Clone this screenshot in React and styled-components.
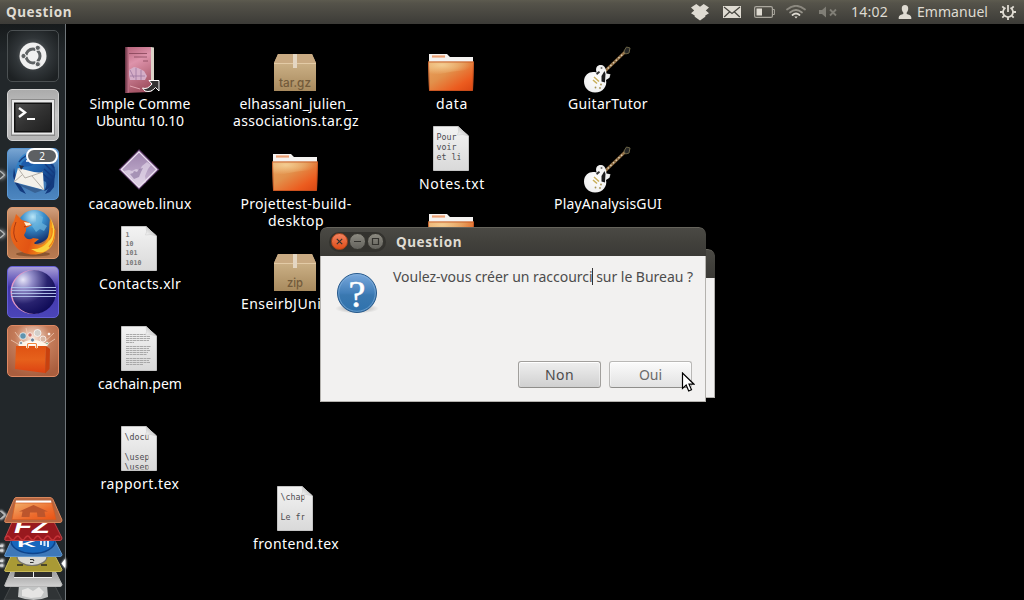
import React from "react";
import styled, { createGlobalStyle, css } from "styled-components";

const FONT = '"Noto Sans", "Open Sans", sans-serif';

const Global = createGlobalStyle`
  * { box-sizing: border-box; }
  html, body { margin: 0; padding: 0; background: #000; overflow: hidden; }
  svg { display: block; }
`;

const Screen = styled.div`
  display: flex;
  flex-direction: column;
  width: 1024px;
  height: 600px;
  overflow: hidden;
  background: #000;
  font-family: ${FONT};
  font-size: 14px;
  color: #fff;
`;

/* ---------- text whose tracking is computed to fill a given width ---------- */

const Line = styled.span`
  display: block;
  flex: none;
  white-space: pre;
  font-size: ${(p) => p.$size}px;
  font-weight: ${(p) => (p.$bold ? 700 : 400)};
`;

let ctx;
function tracking(text, width, size, bold) {
  ctx = ctx || document.createElement("canvas").getContext("2d");
  ctx.font = `${bold ? 700 : 400} ${size}px ${FONT}`;
  return (width - ctx.measureText(text).width) / text.length;
}

function Fit({ children, width, size = 14, bold }) {
  const style = { letterSpacing: `${tracking(children, width, size, bold)}px` };
  return (
    <Line $size={size} $bold={bold} style={style}>
      {children}
    </Line>
  );
}

/* ---------- top panel ---------- */

const Panel = styled.header`
  display: flex;
  align-items: center;
  justify-content: space-between;
  height: 24px;
  flex: none;
  padding: 0 8px 0 6px;
  color: #dfdbd2;
  line-height: 24px;
  background: linear-gradient(#5d5b4f 0, #55534a 3px, #3c3b37 100%);
`;

const Indicators = styled.div`
  display: flex;
  align-items: center;
  height: 24px;
`;

const Slot = styled.div`
  margin-left: ${(p) => p.$gap}px;
`;

const DropboxIcon = () => (
  <svg width="18" height="18" viewBox="0 0 18 18">
    <path
      fill="#dfdbd2"
      d="M5.3 1 9 3.700 12.700 1 18 4.600 14.800 7.400 18 10.300 14.300 12.600v1.200L9 17.400l-5.300-3.600V12.600L0 10.300 3.200 7.400 0 4.600z"
    />
  </svg>
);

const MailIcon = () => (
  <svg width="18" height="12" viewBox="0 0 18 12">
    <rect width="18" height="12" fill="#dfdbd2" />
    <path d="M1 1l8 6.500L17 1M1.200 11l5.300-5M16.800 11l-5.300-5" fill="none" stroke="#45443e" strokeWidth="1.200" />
  </svg>
);

const BatteryIcon = () => (
  <svg width="21" height="12" viewBox="0 0 21 12">
    <rect x="0.6" y="0.6" width="17.800" height="10.800" rx="1.500" fill="none" stroke="#aaa79e" strokeWidth="1.200" />
    <path d="M19 3.500h1.400v5H19" fill="none" stroke="#aaa79e" />
    <rect x="2.500" y="2.500" width="5.500" height="7" fill="#dfdbd2" />
  </svg>
);

const WifiIcon = () => (
  <svg width="20" height="14" viewBox="0 0 20 14" fill="none" strokeLinecap="round">
    <path d="M1 4.500Q10-3 19 4.500" stroke="#8b887f" strokeWidth="1.700" />
    <path d="M4 7.500Q10 2.500 16 7.500" stroke="#97948b" strokeWidth="1.700" />
    <path d="M6.500 10Q10 7 13.500 10" stroke="#dfdbd2" strokeWidth="1.800" />
    <path d="M8.300 11.500h3.400L10 13.500z" fill="#dfdbd2" />
  </svg>
);

const MuteIcon = () => (
  <svg width="18" height="12" viewBox="0 0 18 12">
    <path d="M0 4h3l4-3.500v11L3 8H0z" fill="#807e76" />
    <path d="M11 3.500l6 6m0-6l-6 6" stroke="#807e76" strokeWidth="1.800" />
  </svg>
);

const UserIcon = () => (
  <svg width="14" height="14" viewBox="0 0 14 14">
    <path
      fill="#dfdbd2"
      d="M7 0c2.300 0 3.200 1.500 3.200 3.500 0 1.700-.6 3-1.500 3.900v1.700c2 .8 4.300 1 4.600 3.200V14H.7v-1.700c.3-2.200 2.600-2.400 4.600-3.200V7.400C4.400 6.500 3.800 5.200 3.800 3.500 3.800 1.500 4.700 0 7 0z"
    />
  </svg>
);

const PowerIcon = () => (
  <svg width="16" height="16" viewBox="0 0 16 16" fill="none" stroke="#dfdbd2">
    <path d="M5.500 3.700a5 5 0 1 0 5 0" strokeWidth="1.800" />
    <path d="M8 1v7" strokeWidth="1.800" />
    <path
      d="M0 8h3M13 8h3M8 13v3M2.300 13.700l2-2M13.700 13.700l-2-2M2.300 2.300l2 2M13.700 2.300l-2 2"
      strokeWidth="1.800"
    />
  </svg>
);

function TopPanel() {
  return (
    <Panel>
      <Fit width={66} bold size={13.5}>Question</Fit>
      <Indicators>
        <Slot $gap={0}><DropboxIcon /></Slot>
        <Slot $gap={14}><MailIcon /></Slot>
        <Slot $gap={13}><BatteryIcon /></Slot>
        <Slot $gap={11}><WifiIcon /></Slot>
        <Slot $gap={13}><MuteIcon /></Slot>
        <Slot $gap={14}><Fit width={37}>14:02</Fit></Slot>
        <Slot $gap={10}><UserIcon /></Slot>
        <Slot $gap={5}><Fit width={71}>Emmanuel</Fit></Slot>
        <Slot $gap={12}><PowerIcon /></Slot>
      </Indicators>
    </Panel>
  );
}

/* ---------- launcher ---------- */

const Workspace = styled.div`
  display: flex;
  flex: 1;
  min-height: 0;
`;

const Launcher = styled.nav`
  display: flex;
  flex-direction: column;
  justify-content: space-between;
  width: 66px;
  flex: none;
  padding-top: 6px;
  border-right: 1px solid #70767a;
  background: linear-gradient(#161a1b, #22272a 30px);
`;

const Tiles = styled.div`
  display: flex;
  flex-direction: column;
  gap: 7px;
  padding-left: 7px;
`;

const tones = {
  dash: css`background: radial-gradient(circle at 50% 48%, #74787a 0, #303538 48%, #1d2123 85%); border-color: #4b5052;`,
  grey: css`background: linear-gradient(#ababab, #c6c6c6 50%, #b4b4b4); border-color: #d3d3d3;`,
  blue: css`background: linear-gradient(#78a5d2, #356fae 45%, #4d86bf); border-color: #5b98d4;`,
  brown: css`background: linear-gradient(#d2a07e, #a9663c 45%, #b87b52); border-color: #dd986c;`,
  violet: css`background: linear-gradient(#aaa0d8, #4336ab 40%, #4a45b8); border-color: #6560d6;`,
  orange: css`background: radial-gradient(circle at 50% 25%, #fbeade 0, #c47c5a 40%, #a95e3e 85%); border-color: #df8963;`,
};

const Tile = styled.div`
  position: relative;
  width: 52px;
  height: 52px;
  border: 1px solid;
  border-radius: 5px;
  ${(p) => tones[p.$tone]}

  > svg { margin: -1px; }
`;

const Badge = styled.span`
  position: absolute;
  top: -1px;
  right: 0;
  width: 32px;
  height: 16px;
  border: 2px solid #fff;
  border-radius: 8px;
  background: #5d6063;
  font-size: 10px;
  line-height: 12px;
  text-align: center;
`;

const Running = styled.i`
  position: absolute;
  left: -8px;
  top: 20px;
  width: 6px;
  height: 12px;
  filter: drop-shadow(0 0 2px #fff);

  svg { overflow: visible; }
`;

const Arrow = () => (
  <Running>
    <svg width="6" height="12" viewBox="0 0 6 12">
      <path d="M0 2l4.500 4L0 10" fill="#45494b" stroke="#b5b8b9" strokeWidth="1.200" />
    </svg>
  </Running>
);

const DashArt = () => (
  <svg width="52" height="52" viewBox="0 0 52 52">
    <circle cx="26" cy="26" r="13.500" fill="#f0f0f0" />
    <circle cx="26" cy="26" r="7" fill="none" stroke="#5d6163" strokeWidth="3" />
    <path d="M26 26L15 26M26 26l5.500 9.500M26 26l5.500-9.500" stroke="#f0f0f0" strokeWidth="1.500" />
    <g fill="#5d6163" stroke="#f0f0f0">
      <circle cx="16.500" cy="26" r="2.600" />
      <circle cx="30.800" cy="17.800" r="2.600" />
      <circle cx="30.800" cy="34.200" r="2.600" />
    </g>
  </svg>
);

const TerminalArt = () => (
  <svg width="52" height="52" viewBox="0 0 52 52">
    <defs>
      <linearGradient id="term" x1="0" y1="0" x2="1" y2="1">
        <stop offset="0" stopColor="#4c4c4c" />
        <stop offset="0.5" stopColor="#323232" />
        <stop offset="1" stopColor="#1f1f1f" />
      </linearGradient>
    </defs>
    <rect x="4" y="10" width="44" height="37" fill="#8a8a8a" />
    <rect x="5" y="11" width="42" height="34.500" fill="#e9e9e9" />
    <rect x="7" y="13.500" width="38" height="30" fill="#111" />
    <rect x="8.500" y="15" width="35" height="27" fill="url(#term)" />
    <path d="M12 19l6 4.500-6 4.500" fill="none" stroke="#fff" strokeWidth="2.400" />
    <path d="M20 30h8" stroke="#fff" strokeWidth="2" />
  </svg>
);

const ThunderbirdArt = () => (
  <svg width="52" height="52" viewBox="0 0 52 52">
    <defs>
      <linearGradient id="bird" x1="0" y1="0" x2="1" y2="1">
        <stop offset="0" stopColor="#3d93d5" />
        <stop offset="0.5" stopColor="#1e60ab" />
        <stop offset="1" stopColor="#0d2563" />
      </linearGradient>
    </defs>
    <path d="M12 12C16 3 30 1 39 8c9 6 12 16 7 25-1 5-5 9-9 10 2-3 3-6 2-9L24 27 13 26 11 34c-5-7-3-15 1-22z" fill="url(#bird)" />
    <path d="M7 20l-1 8 2 7 5 8 6 3-5-8-4-4M38 46l6-10 4-12-1 15-4 5z" fill="#133a7e" />
    <path d="M41 12l6 8M38 16l9 9M37 21l9 8M36 26l8 7M12 14q8-10 18-8" fill="none" stroke="#143a80" strokeWidth="1.400" />
    <path d="M11 20l16 4 9 1 1 17-30-8z" fill="#f4f1ea" />
    <path d="M11 20l7 10 18-6M7 34l8-7M37 42l-12-14" fill="none" stroke="#b5b0a8" strokeWidth="1" />
    <path d="M8 35l28 7-8 3z" fill="#29446e" opacity="0.500" />
    <path d="M14 16q5-7 12-5 3 4-2 7l-8 1z" fill="#1c5baa" />
    <path d="M12 17l2 5 3-4z" fill="#252b42" />
    <circle cx="20" cy="13" r="1" fill="#fff" />
  </svg>
);

const FirefoxArt = () => (
  <svg width="52" height="52" viewBox="0 0 52 52">
    <defs>
      <radialGradient id="globe" cx="0.45" cy="0.2" r="0.8">
        <stop offset="0" stopColor="#b9e6f7" />
        <stop offset="0.4" stopColor="#3b91ce" />
        <stop offset="1" stopColor="#102a68" />
      </radialGradient>
      <linearGradient id="fox" x1="0" y1="0" x2="1" y2="0.300">
        <stop offset="0" stopColor="#ee6b1c" />
        <stop offset="0.600" stopColor="#e25413" />
        <stop offset="1" stopColor="#f8a51d" />
      </linearGradient>
    </defs>
    <ellipse cx="26" cy="47" rx="17" ry="2.500" fill="#5d2f12" opacity="0.500" />
    <circle cx="27.500" cy="20" r="17" fill="url(#globe)" />
    <path d="M29 7l7 3-1 6 5 3-3 5-4-2-4 3-4-6 4-4z" fill="#6cb7de" opacity="0.700" />
    <path d="M43 12c6 8 7 20 1 28-8 10-27 10-35 0C1 31 3 19 7 14l2-7 6 6 6 2 4 3-6 3 0 3-2 4c2 5 6 5 9 3l6 1-5 4c4 5 12 1 14-6 2-7 1-12 2-18z" fill="url(#fox)" />
    <path d="M43 10q6 14-2 25-7 8-17 7 12 8 20-3 8-12-1-29z" fill="#fbd23d" />
    <path d="M45 21q1 8-3 12M48 23q0 11-6 17" fill="none" stroke="#f07c18" strokeWidth="1.200" />
    <path d="M9 15q-5 12 1 20M17 20l4-2" fill="none" stroke="#a93711" strokeWidth="1" />
    <path d="M17 15l6 1 1 2-5 1z" fill="#fff0d5" />
  </svg>
);

const EclipseArt = () => (
  <svg width="52" height="52" viewBox="0 0 52 52">
    <defs>
      <radialGradient id="ecl" cx="0.25" cy="0.22" r="0.85">
        <stop offset="0" stopColor="#e8e6f8" />
        <stop offset="0.25" stopColor="#948fcb" />
        <stop offset="0.65" stopColor="#28226f" />
        <stop offset="1" stopColor="#100c58" />
      </radialGradient>
    </defs>
    <circle cx="25.500" cy="26" r="22" fill="#e39ac6" />
    <circle cx="27" cy="26" r="22" fill="url(#ecl)" />
    <g stroke="#aebde8" strokeWidth="1">
      <path d="M4 21.500h45M4 24.500h45M4 27.500h45M4 30.500h45" />
    </g>
  </svg>
);

const StoreArt = () => (
  <svg width="52" height="52" viewBox="0 0 52 52">
    <defs>
      <linearGradient id="bag" x1="0" y1="0" x2="0" y2="1">
        <stop offset="0" stopColor="#df5213" />
        <stop offset="0.5" stopColor="#e6611b" />
        <stop offset="1" stopColor="#dd4212" />
      </linearGradient>
    </defs>
    <path d="M8 7l10 13M4 15l12 7M19 3l4 17M31 4l-4 16M47 8L33 21M48 14l-12 8" stroke="#f3d3bd" strokeWidth="0.700" />
    <path d="M11 20Q26 10 41 20l-4 3H15z" fill="#fff6e8" />
    <g stroke="#fff" strokeWidth="0.700">
      <circle cx="16" cy="11" r="3.300" fill="#5f93ae" /><circle cx="23" cy="10" r="2.200" fill="#d2766a" />
      <circle cx="30.500" cy="8" r="3.500" fill="#d2cfca" /><circle cx="36" cy="14" r="3" fill="#d8b7a4" />
      <circle cx="25.500" cy="15" r="2" fill="#697f94" /><circle cx="14" cy="18" r="1.700" fill="#8ea0aa" />
      <circle cx="40" cy="18.500" r="1.300" fill="#8aaa86" /><circle cx="42" cy="9" r="1" fill="#fff" />
    </g>
    <path d="M9 21h30l-1 27L8 44z" fill="url(#bag)" />
    <path d="M39 21l4 3-.5 20L38 48.500z" fill="#c8410f" />
    <path d="M20.500 23v-3.500q0-1 1-1h7q1 0 1 1V23" fill="none" stroke="#fff" strokeWidth="2.600" />
    <path d="M20.500 24v-4.500q0-1 1-1h7q1 0 1 1V24" fill="none" stroke="#f1853b" strokeWidth="1.200" />
  </svg>
);

const Folded = styled.div`
  height: 106px;

  svg { overflow: visible; }
`;

const FoldedStack = () => (
  <Folded>
    <svg width="65" height="106" viewBox="0 494 65 106">
      <defs>
        <linearGradient id="home" x1="0" y1="0" x2="1" y2="1">
          <stop offset="0" stopColor="#f0b06c" />
          <stop offset="0.6" stopColor="#ed6c2e" />
          <stop offset="1" stopColor="#ea5314" />
        </linearGradient>
        <linearGradient id="silver" x1="0" y1="0" x2="0" y2="1">
          <stop offset="0" stopColor="#8f8f8f" />
          <stop offset="1" stopColor="#d0d0d0" />
        </linearGradient>
        <filter id="glow" x="-1" y="-1" width="3" height="3">
          <feGaussianBlur stdDeviation="1.300" />
        </filter>
        <clipPath id="clipRed"><rect x="0" y="523" width="65" height="11.500" /></clipPath>
        <clipPath id="clipGold"><rect x="0" y="556" width="65" height="12" /></clipPath>
      </defs>
      <path d="M13 582h40l9 18H4z" fill="#303436" stroke="#45494b" />
      <path d="M19 585h28l1 12q-14 6-30 0z" fill="#c3c5c5" />
      <path d="M22 590l6-2 5 3 6-4 5 5-3 5-10 1-9-2z" fill="#e5e5e4" />
      <path d="M13 567h40l9 17.500q0 2-2 2H6q-2 0-1-2z" fill="url(#silver)" stroke="#b9b9b9" />
      <path d="M15 571h37v6.500H14z" fill="#2d2d2d" />
      <path d="M14 577.500h38M33.500 571v6" stroke="#eee" strokeWidth="1" />
      <path d="M13 552h40l9 17.500q0 2-2 2H6q-2 0-1-2z" fill="#a99a35" stroke="#c8b957" />
      <g clipPath="url(#clipGold)">
        <ellipse cx="32" cy="556.500" rx="15" ry="9" fill="#d8d8d4" stroke="#77746a" strokeWidth="1.200" />
        <path d="M30 559.500h3l1 1.500M30 562.500h3.500" fill="none" stroke="#333" strokeWidth="1.200" />
        <path d="M17 565h6M41 565h6" stroke="#4b4727" strokeWidth="2" />
      </g>
      <path d="M13 537h40l9 17.500q0 2-2 2H6q-2 0-1-2z" fill="#3e78b8" stroke="#6196cc" />
      <ellipse cx="33" cy="541" rx="22" ry="12.500" fill="#1767bd" stroke="#0d438b" strokeWidth="1.500" />
      <text x="17" y="547" fill="#fff" fontFamily="Liberation Sans" fontWeight="700" fontSize="9.500" textLength="19" lengthAdjust="spacingAndGlyphs">K</text>
      <path d="M40 541h2v4h-2zM43.500 540h2v6h-2zM47 541h2v6h-2z" fill="#d8e9fa" />
      <path d="M13 520h40l9 18q0 2.500-2 2.500H6q-2 0-1-2.500z" fill="#98191e" stroke="#bd4548" />
      <path d="M5 538q3-4 5 0 3 4 5 0 3-4 5 0 3 4 5 0 3-4 5 0 3 4 5 0 3-4 5 0 3 4 5 0 3-4 5 0 3 4 5 0 3-4 5 0" fill="none" stroke="#c73438" strokeWidth="1.300" />
      <g clipPath="url(#clipRed)">
        <text x="14" y="533" fill="#fff" fontFamily="Liberation Sans" fontStyle="italic" fontWeight="700" fontSize="20" textLength="36" lengthAdjust="spacingAndGlyphs">FZ</text>
      </g>
      <path d="M16 497.500h34q2 0 3 2l9 20.500q0 2.500-2 2.500H6q-2 0-1-2.500l9-20.500q1-2 2-2z" fill="#b36541" stroke="#d8875c" />
      <path d="M16 500.500h35l1 5H15z" fill="#fff" />
      <path d="M15 503h37l4 16.500H12z" fill="url(#home)" stroke="#d65a20" strokeWidth="0.700" />
      <path d="M33.500 505L48 511.500h-3.500l1 5.500h-8l-.5-4.500h-7l-.5 4.500h-8l1-5.500H19z" fill="#bc552c" />
      <g fill="#fff">
        <path d="M0 511l4.500 4L0 519" fill="none" stroke="#fff" filter="url(#glow)" strokeWidth="3" />
        <path d="M0 511l4.500 4L0 519" fill="#3d4143" stroke="#aaa" />
        <path d="M0 544h4v3H0zM0 549h4v3H0zM0 559h4v3H0zM0 564h4v3H0z" filter="url(#glow)" />
        <path d="M0 545h3v2H0zM0 549.500h3v2H0zM0 560h3v2H0zM0 564.500h3v2H0z" fill="#d5d6d7" />
        <path d="M66 558v11l-4.500-5.500z" filter="url(#glow)" />
        <path d="M65 559v9l-3.500-4.500z" />
      </g>
    </svg>
  </Folded>
);

/* ---------- desktop icons ---------- */

const Desktop = styled.main`
  position: relative;
  flex: 1;
`;

const Item = styled.figure`
  position: absolute;
  left: ${(p) => p.$x - 144}px;
  top: ${(p) => p.$y - 24}px;
  display: flex;
  flex-direction: column;
  align-items: center;
  width: 156px;
  margin: 0;
`;

const Caption = styled.figcaption`
  display: flex;
  flex-direction: column;
  align-items: center;
  padding: 1px 0 0 2px;
  line-height: 17px;
`;

const Book = () => (
  <svg width="48" height="48" viewBox="0 0 48 48">
    <defs>
      <linearGradient id="cover" x1="0" y1="0" x2="0.300" y2="1">
        <stop offset="0" stopColor="#b46077" />
        <stop offset="0.4" stopColor="#de93ab" />
        <stop offset="1" stopColor="#a65667" />
      </linearGradient>
      <linearGradient id="spine">
        <stop stopColor="#5c2c3b" />
        <stop offset="1" stopColor="#c9778e" />
      </linearGradient>
    </defs>
    <path d="M36 1l3 .5v39L36 46z" fill="#dcd3c8" />
    <path d="M10 1l26 0v45l-26 1z" fill="url(#cover)" />
    <path d="M10 1h4v45.500l-4 .5z" fill="url(#spine)" />
    <path d="M14 7.500h18M19 11h13M28 15h5" stroke="#6c2f42" strokeWidth="1" opacity="0.600" />
    <path d="M14 24l5-3 4 1 6 3 3 5-2 4H15l-1-5z" fill="#d5aec8" />
    <path d="M15 24l4 8M21 22v12M26 24v10M15 30h15" stroke="#9d76a0" strokeWidth="0.800" />
    <path d="M15 40l10 3" stroke="#e2a6b3" />
    <path d="M27.500 42q5 2 9.500-4l-3-3.500h10V45l-3.500-3.500Q36 47 30 45z" fill="#333" stroke="#fff" strokeWidth="1" />
  </svg>
);

const Folder = () => (
  <svg width="48" height="48" viewBox="0 0 48 48">
    <defs>
      <linearGradient id="folder" x1="0" y1="0" x2="1" y2="1">
        <stop offset="0" stopColor="#e9a561" />
        <stop offset="0.4" stopColor="#e2904b" />
        <stop offset="0.75" stopColor="#ec5c1f" />
        <stop offset="1" stopColor="#d94511" />
      </linearGradient>
      <radialGradient id="sheen" cx="0.3" cy="0.2" r="0.65">
        <stop offset="0" stopColor="#f7d9a0" stopOpacity="0.800" />
        <stop offset="1" stopColor="#f7d9a0" stopOpacity="0" />
      </radialGradient>
    </defs>
    <path d="M2 8h18l3 3h23v8H2z" fill="#f5f3f1" />
    <path d="M5 10.500h13" stroke="#eda174" strokeWidth="2.200" />
    <path d="M1 15.500h46l-1 28.500q0 1-1 1H3q-1 0-1-1z" fill="url(#folder)" />
    <path d="M1.500 16h45l-.3 8Q25 24 2 31z" fill="url(#sheen)" />
    <path d="M1.500 16h45l-1 28.500h-43z" fill="none" stroke="#bd4c1d" strokeWidth="1" opacity="0.700" />
  </svg>
);

const Package = ({ kind }) => (
  <svg width="48" height="48" viewBox="0 0 48 48">
    <defs>
      <linearGradient id="pack" x1="0" y1="0" x2="0" y2="1">
        <stop offset="0" stopColor="#d6bc92" />
        <stop offset="1" stopColor="#a88a5e" />
      </linearGradient>
    </defs>
    <path d="M7 8h34l4 9v28H3V17z" fill="url(#pack)" />
    <path d="M7 8h34l4 9H3z" fill="#c9aa82" />
    <path d="M3 17.500h42" stroke="#e3cba6" />
    <path d="M22 8h4v14h-4z" fill="#e4d6c2" />
    <text
      x="24" y="41" textAnchor="middle" fill="#735b3b"
      fontFamily="Inter, sans-serif" fontWeight="500" fontSize="12.500"
      textLength={kind === "zip" ? 16 : 32} lengthAdjust="spacingAndGlyphs"
    >
      {kind}
    </text>
  </svg>
);

const Sheet = ({ lines = [], binary, small }) => (
  <svg width="48" height="48" viewBox="0 0 48 48">
    <defs>
      <linearGradient id="paper" x1="0" y1="0" x2="0" y2="1">
        <stop offset="0" stopColor="#f3f3f3" />
        <stop offset="1" stopColor="#d9d9d9" />
      </linearGradient>
      <linearGradient id="fold" x1="0" y1="1" x2="0.700" y2="0.200">
        <stop offset="0" stopColor="#fff" />
        <stop offset="1" stopColor="#bbb" />
      </linearGradient>
      <clipPath id="printArea"><rect x="9" y="4" width="24.500" height="39.500" /></clipPath>
    </defs>
    <path d="M6.500.5H31L41.500 10v34.500h-35z" fill="url(#paper)" stroke="#c4c4c4" />
    {small ? (
      <path
        d="M11 8.500h20M11 10.500h24M11 12.500h24M11 14.500h23M11 16.500h8M11 20.500h25M11 22.500h23M11 24.500h24M11 26.500h22M11 28.500h21M11 32.500h25M11 34.500h23M11 36.500h24M11 38.500h17"
        stroke="#a2a2a2" strokeWidth="0.900" strokeDasharray="3 .5"
      />
    ) : (
      <g
        clipPath={binary ? undefined : "url(#printArea)"}
        fill={binary ? "#777" : "#4c4c50"}
        fontFamily='"DejaVu Sans Mono", monospace'
        fontWeight={binary ? 700 : 400}
        fontSize={binary ? 6.6 : 8.3}
      >
        {lines.map((line, i) => (
          <text key={i} x={binary ? 10.5 : 9.5} y={binary ? 11 + i * 9.2 : 13.5 + i * 10}>{line}</text>
        ))}
      </g>
    )}
    <path d="M31 .5q1.500 6-.5 8.500 5-1.500 11 1z" fill="url(#fold)" stroke="#c9c9c9" strokeWidth="0.500" />
  </svg>
);

const Diamond = () => (
  <svg width="48" height="48" viewBox="0 0 48 48">
    <defs>
      <linearGradient id="gem" x1="0" y1="0" x2="0" y2="1">
        <stop offset="0" stopColor="#9a80aa" />
        <stop offset="1" stopColor="#cfbdd9" />
      </linearGradient>
    </defs>
    <path d="M24 4l19.500 19.500L24 43 4.500 23.500z" fill="url(#gem)" stroke="#5f3d6b" strokeWidth="1.200" />
    <path d="M24 5.800l17.700 17.700L24 41.200 6.300 23.500z" fill="none" stroke="#efe5f3" strokeWidth="1.200" />
    <path d="M9 25l5-1 3 1 4-2 4 1 2-4 5-4 4 3-3 4-3 7 1 6-7 4z" fill="#e9e0ef" opacity="0.600" />
    <path d="M15 28l3-1 1-2 3 1 2-3 4-1-2 4-2 5-5 2z" fill="#917ca4" opacity="0.700" />
  </svg>
);

const Guitar = () => (
  <svg width="48" height="48" viewBox="0 0 48 48">
    <defs>
      <radialGradient id="body" cx="0.45" cy="0.5" r="0.7">
        <stop offset="0" stopColor="#fff" />
        <stop offset="0.7" stopColor="#f0f0f0" />
        <stop offset="1" stopColor="#b0b0b0" />
      </radialGradient>
    </defs>
    <path d="M20 27L42 6" stroke="#8f6c42" strokeWidth="2.800" />
    <path d="M22 25L41 7" stroke="#dccfb6" strokeWidth="1.400" strokeDasharray="1.500 2.200" />
    <path d="M41 5l2.500-4 3.500 1-1 5-3.500 1z" fill="#252525" stroke="#6c6546" strokeWidth="1" />
    <path
      d="M13.500 26C12 21 15 18.500 18.500 19 22 19.500 23 23 23.500 27.500l4 .8-1 3.500-3.500 2.200C24.500 40 20 46.500 12 46.500 5 46.500 1 41 1 35.500 1 29 6 26 10 26c2 0 3.500.5 3.500 0z"
      fill="url(#body)"
    />
    <path d="M18.500 30l3-5 1 3-.5 8.500-3.500-1z" fill="#1c1c1c" />
    <path d="M13 27l3-2 1 1.500-3 2.500z" fill="#333" />
    <path d="M11 31l5 4.500M10 34l4 3.500" stroke="#c9b05c" strokeWidth="1.600" />
    <g fill="#a59251">
      <circle cx="18" cy="38.500" r="0.900" /><circle cx="12.500" cy="41.500" r="0.900" /><circle cx="17" cy="42" r="0.900" />
      <circle cx="18.500" cy="22" r="1" fill="#777" />
    </g>
  </svg>
);

const items = [
  { x: 139, y: 46, art: <Book />, label: [["Simple Comme", 101], ["Ubuntu 10.10", 88]] },
  { x: 139, y: 146, art: <Diamond />, label: [["cacaoweb.linux", 103]] },
  { x: 139, y: 226, art: <Sheet binary lines={["1", "10", "101", "1010"]} />, label: [["Contacts.xlr", 82]] },
  { x: 139, y: 326, art: <Sheet small />, label: [["cachain.pem", 84]] },
  { x: 139, y: 426, art: <Sheet lines={["\\docu", "", "\\usepa", "\\usepa"]} />, label: [["rapport.tex", 79]] },
  { x: 295, y: 46, art: <Package kind="tar.gz" />, label: [["elhassani_julien_", 113], ["associations.tar.gz", 126]] },
  { x: 295, y: 146, art: <Folder />, label: [["Projettest-build-", 111], ["desktop", 56]] },
  { x: 295, y: 246, art: <Package kind="zip" />, label: [["EnseirbJUnit.zip", 110]] },
  { x: 295, y: 486, art: <Sheet lines={["\\chapt", "", "Le fra"]} />, label: [["frontend.tex", 86]] },
  { x: 451, y: 46, art: <Folder />, label: [["data", 32]] },
  { x: 451, y: 126, art: <Sheet lines={["Pour", "voir", "et li"]} />, label: [["Notes.txt", 66]] },
  { x: 451, y: 206, art: <Folder />, label: [] },
  { x: 607, y: 46, art: <Guitar />, label: [["GuitarTutor", 80]] },
  { x: 607, y: 146, art: <Guitar />, label: [["PlayAnalysisGUI", 108]] },
];

/* ---------- windows ---------- */

const Window = styled.section`
  position: absolute;
  left: ${(p) => p.$x - 66}px;
  top: ${(p) => p.$y - 24}px;
  width: ${(p) => p.$w}px;
  height: ${(p) => p.$h}px;
  display: flex;
  flex-direction: column;
  border-radius: 7px 7px 0 0;
  overflow: hidden;
`;

const TitleBar = styled.div`
  display: flex;
  align-items: center;
  flex: none;
  height: 29px;
  padding-left: 9px;
  color: #dfdbd2;
  line-height: 29px;
  border-top: 1px solid #66645c;
  border-radius: 7px 7px 0 0;
  background: linear-gradient(#4a4944, #42413c 50%, #3b3a36);
`;

const Controls = styled.div`
  display: flex;
  gap: 1px;
  height: 20px;
  padding: 1px 2px;
  border-radius: 10px;
  background: #33322e;
  margin-right: 10px;
`;

const Control = styled.span`
  display: grid;
  place-items: center;
  width: 17px;
  height: 17px;
  border: 1px solid ${(p) => (p.$close ? "#a9461d" : "#373631")};
  border-radius: 50%;
  background: ${(p) => (p.$close ? "linear-gradient(#f28260, #df4d17)" : "linear-gradient(#8c8a81, #63625c)")};
`;

const Content = styled.div`
  display: flex;
  flex-direction: column;
  justify-content: space-between;
  flex: 1;
  padding: 12px 13px 13px 16px;
  border: 1px solid #b4b2ae;
  border-top: 0;
  background: #f2f1f0;
  color: #4c4c4c;
`;

const Message = styled.div`
  display: flex;
  gap: 14px;

  > svg { flex: none; }
`;

const Question = styled.p`
  position: relative;
  margin: 0;
  line-height: 18px;
`;

const Caret = styled.i`
  position: absolute;
  left: 199px;
  top: 0;
  width: 1px;
  height: 17px;
  background: #333;
`;

const Actions = styled.div`
  display: flex;
  justify-content: flex-end;
  gap: 8px;
`;

const Button = styled.button`
  display: flex;
  align-items: center;
  justify-content: center;
  width: 83px;
  height: 27px;
  padding: 0;
  border: 1px solid ${(p) => (p.$hover ? "#b9b8b6" : "#a19f9c")};
  border-bottom-color: #8f8e8b;
  border-radius: 3px;
  font-family: ${FONT};
  line-height: 20px;
  color: ${(p) => (p.$hover ? "#6b6b6b" : "#4c4c4c")};
  background: ${(p) => (p.$hover ? "linear-gradient(#fbfbfb, #e2e2e2)" : "linear-gradient(#efefef, #d0d0d0)")};
  box-shadow: inset 0 1px #fff, inset 1px 0 #ffffff66, inset -1px 0 #ffffff66;
`;

const Pointer = styled.div`
  position: absolute;
  left: 615px;
  top: 348px;
`;

const HelpIcon = () => (
  <svg width="42" height="46" viewBox="0 0 42 46" overflow="visible">
    <defs>
      <linearGradient id="help" x1="0" y1="0" x2="0" y2="1">
        <stop offset="0" stopColor="#7aa9dd" />
        <stop offset="0.5" stopColor="#427fb9" />
        <stop offset="0.55" stopColor="#3a78b0" />
        <stop offset="1" stopColor="#2f72ad" />
      </linearGradient>
      <radialGradient id="shade">
        <stop stopColor="#777" stopOpacity="0.700" />
        <stop offset="1" stopColor="#777" stopOpacity="0" />
      </radialGradient>
    </defs>
    <ellipse cx="20" cy="40.500" rx="22" ry="5" fill="url(#shade)" />
    <circle cx="20" cy="25" r="19.500" fill="url(#help)" stroke="#285a8c" />
    <circle cx="20" cy="25" r="18.300" fill="none" stroke="#8ab5dd" strokeOpacity="0.600" />
    <text
      x="20" y="38.500" textAnchor="middle" fill="#fff" stroke="#fff" strokeWidth="0.500"
      fontFamily='"Liberation Serif", serif' fontSize="38"
    >
      ?
    </text>
  </svg>
);

const Glyph = ({ d }) => (
  <svg width="15" height="15" viewBox="0 0 15 15">
    <path d={d} fill="none" stroke="#33322e" strokeWidth="1.200" />
  </svg>
);

function QuestionDialog() {
  return (
    <Window $x={320} $y={227} $w={386} $h={175}>
      <TitleBar>
        <Controls>
          <Control $close><Glyph d="M4.800 4.800l5.400 5.400m0-5.400l-5.400 5.400" /></Control>
          <Control><Glyph d="M4 7.500h7" /></Control>
          <Control><Glyph d="M4.500 4.500h6v6h-6z" /></Control>
        </Controls>
        <Fit width={66} bold size={13.5}>Question</Fit>
      </TitleBar>
      <Content>
        <Message>
          <HelpIcon />
          <Question>
            <Fit width={300}>Voulez-vous créer un raccourci sur le Bureau ?</Fit>
            <Caret />
          </Question>
        </Message>
        <Actions>
          <Button><Fit width={29}>Non</Fit></Button>
          <Button $hover><Fit width={23}>Oui</Fit></Button>
        </Actions>
      </Content>
    </Window>
  );
}

export default function App() {
  return (
    <Screen>
      <Global />
      <TopPanel />
      <Workspace>
        <Launcher>
          <Tiles>
            <Tile $tone="dash"><DashArt /></Tile>
            <Tile $tone="grey"><TerminalArt /></Tile>
            <Tile $tone="blue"><ThunderbirdArt /><Badge>2</Badge><Arrow /></Tile>
            <Tile $tone="brown"><FirefoxArt /><Arrow /></Tile>
            <Tile $tone="violet"><EclipseArt /></Tile>
            <Tile $tone="orange"><StoreArt /></Tile>
          </Tiles>
          <FoldedStack />
        </Launcher>
        <Desktop>
          {items.map((item, i) => (
            <Item key={i} $x={item.x} $y={item.y}>
              {item.art}
              <Caption>
                {item.label.map(([text, width]) => (
                  <Fit key={text} width={width}>{text}</Fit>
                ))}
              </Caption>
            </Item>
          ))}
          <Window $x={330} $y={249} $w={385} $h={149}>
            <TitleBar />
            <Content />
          </Window>
          <QuestionDialog />
          <Pointer>
            <svg width="14" height="21" viewBox="0 0 14 21">
              <path d="M1.500 1v15.500l3.700-3.400 2.500 5.900 2.800-1.200-2.500-5.600H13z" fill="#fff" stroke="#000" strokeWidth="1.200" />
            </svg>
          </Pointer>
        </Desktop>
      </Workspace>
    </Screen>
  );
}
